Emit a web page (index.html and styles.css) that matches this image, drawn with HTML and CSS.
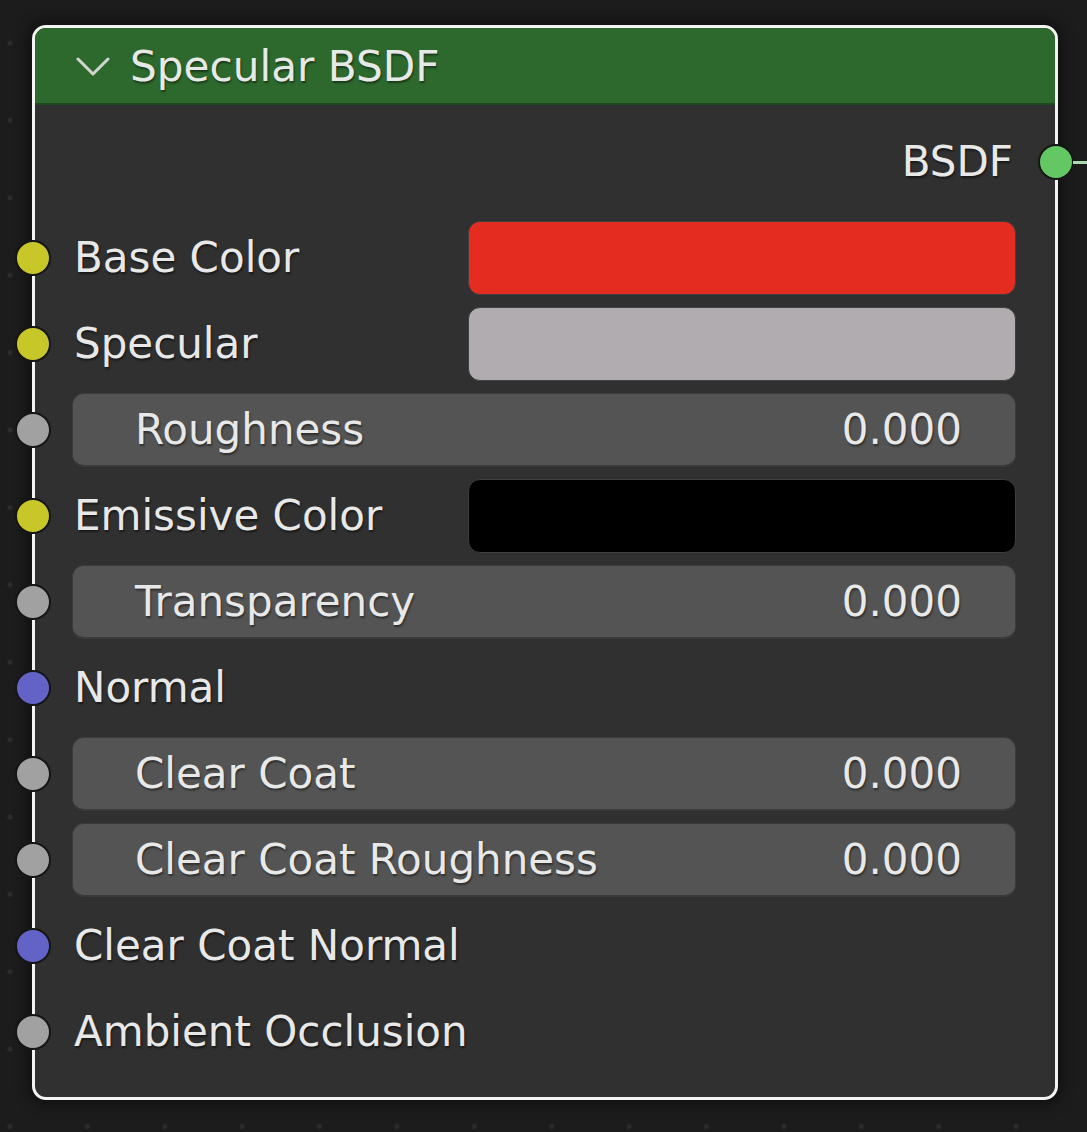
FILE: index.html
```html
<!DOCTYPE html>
<html>
<head>
<meta charset="utf-8">
<link rel="stylesheet" href="styles.css">
</head>
<body>
<div class="node">
  <div class="header">
    <svg class="chevron" width="34" height="20" viewBox="0 0 34 20"><path d="M2 2 L17 17 L32 2" fill="none" stroke="#d2d6d2" stroke-width="3" stroke-linecap="round" stroke-linejoin="round"/></svg>
    <span class="title">Specular BSDF</span>
  </div>
  <div class="body">
    <div class="row output">
      <span class="label">BSDF</span>
      <span class="socket out green"></span>
      <span class="link"></span>
    </div>
    <div class="inputs">
      <div class="row">
        <span class="socket yellow"></span>
        <span class="label col">Base Color</span>
        <span class="color red"></span>
      </div>
      <div class="row">
        <span class="socket yellow"></span>
        <span class="label col">Specular</span>
        <span class="color grey"></span>
      </div>
      <div class="row slider-row">
        <span class="socket gray"></span>
        <div class="slider"><span>Roughness</span><span>0.000</span></div>
      </div>
      <div class="row">
        <span class="socket yellow"></span>
        <span class="label col">Emissive Color</span>
        <span class="color black"></span>
      </div>
      <div class="row slider-row">
        <span class="socket gray"></span>
        <div class="slider"><span>Transparency</span><span>0.000</span></div>
      </div>
      <div class="row">
        <span class="socket blue"></span>
        <span class="label">Normal</span>
      </div>
      <div class="row slider-row">
        <span class="socket gray"></span>
        <div class="slider"><span>Clear Coat</span><span>0.000</span></div>
      </div>
      <div class="row slider-row">
        <span class="socket gray"></span>
        <div class="slider"><span>Clear Coat Roughness</span><span>0.000</span></div>
      </div>
      <div class="row">
        <span class="socket blue"></span>
        <span class="label">Clear Coat Normal</span>
      </div>
      <div class="row">
        <span class="socket gray"></span>
        <span class="label">Ambient Occlusion</span>
      </div>
    </div>
  </div>
</div>
</body>
</html>
```
FILE: styles.css
```css
html, body {
  margin: 0;
  padding: 0;
}
body {
  width: 1087px;
  height: 1132px;
  overflow: hidden;
  background-color: #1c1c1c;
  background-image: radial-gradient(circle, #2c2c2c 0, #2c2c2c 2px, rgba(44,44,44,0) 3px);
  background-size: 77.4px 77.4px;
  background-position: -28.7px 4.3px;
  font-family: "DejaVu Sans", sans-serif;
  color: #e8e8e8;
  padding-top: 25px;
  padding-left: 32px;
  box-sizing: border-box;
}
.node {
  width: 1026px;
  box-sizing: border-box;
  border: 3px solid #f4f4f4;
  border-radius: 14px;
  background: #303030;
  box-shadow: 0 0 14px 4px rgba(0,0,0,0.45);
}
.header {
  height: 75px;
  border-bottom: 2px solid #1f4a20;
  background: #2d692d;
  border-radius: 11px 11px 0 0;
  display: flex;
  align-items: center;
  padding-left: 41px;
  gap: 20px;
}
.chevron {
  margin-top: 2px;
  flex: none;
}
.title {
  font-size: 42.2px;
  color: #e6e9e6;
  text-shadow: 1px 2px 2px rgba(0,0,0,0.45);
  line-height: 1;
  margin-top: 4px;
}
.body {
  padding: 14px 0 22px;
}
.inputs {
  margin-top: 10px;
}
.row {
  position: relative;
  height: 86px;
  display: flex;
  align-items: center;
  padding: 0 39px 0 39px;
}
.row.output {
  justify-content: flex-end;
  padding-right: 42px;
}
.row.slider-row {
  padding-left: 37px;
}
.label {
  font-size: 42px;
  line-height: 1;
  text-shadow: 1px 2px 2px rgba(0,0,0,0.5);
  white-space: nowrap;
}
.label.col {
  width: 394px;
  flex: none;
}
.socket {
  position: absolute;
  left: -20px;
  top: 50%;
  width: 32px;
  height: 32px;
  margin-top: -18px;
  border: 2px solid #161616;
  border-radius: 50%;
}
.socket.out {
  left: auto;
  right: -19px;
}
.link {
  position: absolute;
  right: -35px;
  top: 50%;
  margin-top: -1px;
  width: 17px;
  height: 3px;
  background: #a8dcb0;
}
.yellow { background: #c7c729; }
.gray { background: #a1a1a1; }
.blue { background: #6363c7; }
.green { background: #63c763; }
.color {
  flex: 1;
  height: 74px;
  box-sizing: border-box;
  border: 1px solid #3f3f3f;
  border-radius: 12px;
}
.color.red { background: #e52c21; }
.color.grey { background: #b1acaf; }
.color.black { background: #000000; }
.slider {
  flex: 1;
  height: 74px;
  box-sizing: border-box;
  border: 1px solid #3c3c3c;
  border-bottom: 2px solid #3a3a3a;
  border-radius: 12px;
  background: #545454;
  display: flex;
  align-items: center;
  justify-content: space-between;
  padding: 0 53px 0 62px;
  font-size: 42px;
  line-height: 1;
  text-shadow: 1px 2px 2px rgba(0,0,0,0.45);
  white-space: nowrap;
}
```
